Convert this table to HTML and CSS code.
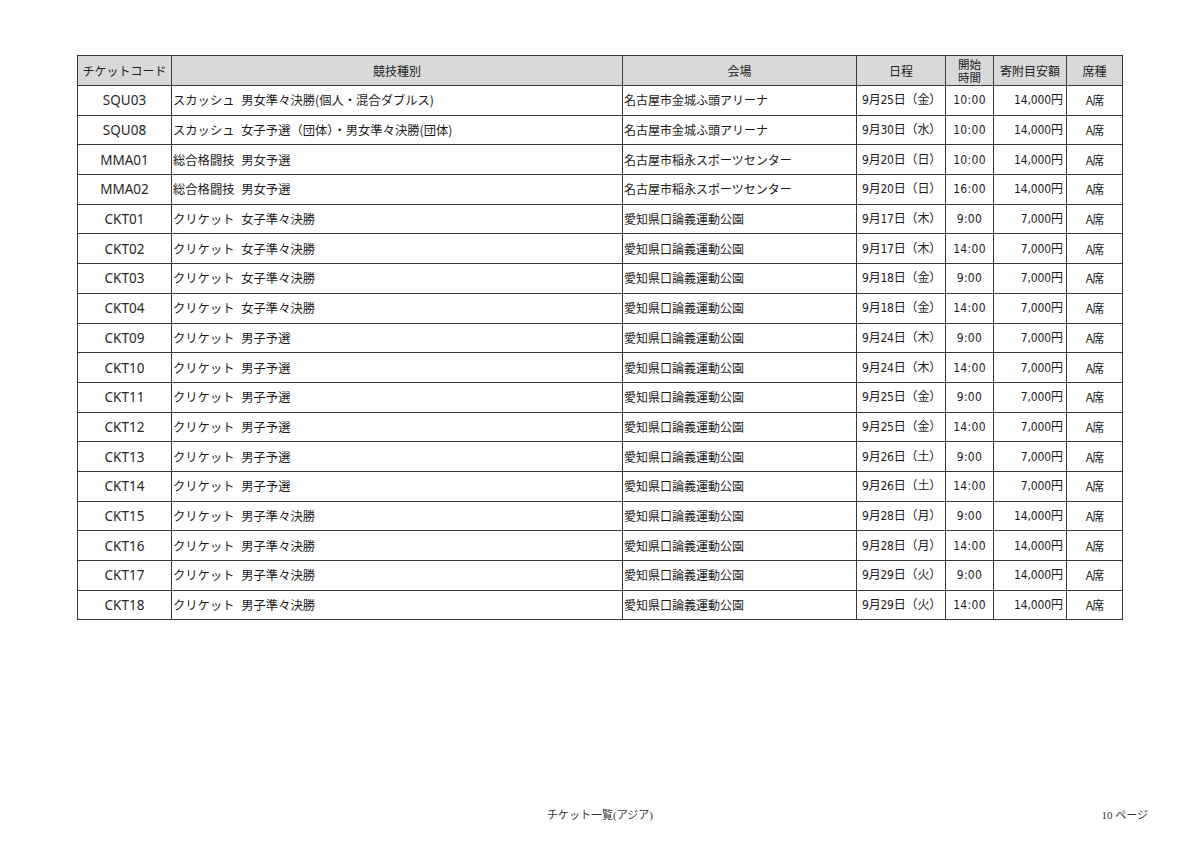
FILE: index.html
```html
<!DOCTYPE html>
<html lang="ja">
<head>
<meta charset="utf-8">
<link rel="stylesheet" href="styles.css">
</head>
<body>
<div class="page">
  <table class="tickets">
    <colgroup>
      <col class="c-code"><col class="c-event"><col class="c-venue"><col class="c-date"><col class="c-time"><col class="c-amt"><col class="c-seat">
    </colgroup>
    <thead>
      <tr>
        <th class="jp">チケットコード</th>
        <th>競技種別</th>
        <th>会場</th>
        <th>日程</th>
        <th class="two"><span class="ln">開始</span><span class="ln">時間</span></th>
        <th>寄附目安額</th>
        <th>席種</th>
      </tr>
    </thead>
    <tbody>
      <tr><td class="code">SQU03</td><td class="ev">スカッシュ 男女準々決勝(個人・混合ダブルス)</td><td class="ven">名古屋市金城ふ頭アリーナ</td><td class="date">9月25日（金）</td><td class="time">10:00</td><td class="amt">14,000円</td><td class="seat">A席</td></tr>
      <tr><td class="code">SQU08</td><td class="ev">スカッシュ 女子予選（団体）・男女準々決勝(団体)</td><td class="ven">名古屋市金城ふ頭アリーナ</td><td class="date">9月30日（水）</td><td class="time">10:00</td><td class="amt">14,000円</td><td class="seat">A席</td></tr>
      <tr><td class="code">MMA01</td><td class="ev">総合格闘技 男女予選</td><td class="ven">名古屋市稲永スポーツセンター</td><td class="date">9月20日（日）</td><td class="time">10:00</td><td class="amt">14,000円</td><td class="seat">A席</td></tr>
      <tr><td class="code">MMA02</td><td class="ev">総合格闘技 男女予選</td><td class="ven">名古屋市稲永スポーツセンター</td><td class="date">9月20日（日）</td><td class="time">16:00</td><td class="amt">14,000円</td><td class="seat">A席</td></tr>
      <tr><td class="code">CKT01</td><td class="ev">クリケット 女子準々決勝</td><td class="ven">愛知県口論義運動公園</td><td class="date">9月17日（木）</td><td class="time">9:00</td><td class="amt">7,000円</td><td class="seat">A席</td></tr>
      <tr><td class="code">CKT02</td><td class="ev">クリケット 女子準々決勝</td><td class="ven">愛知県口論義運動公園</td><td class="date">9月17日（木）</td><td class="time">14:00</td><td class="amt">7,000円</td><td class="seat">A席</td></tr>
      <tr><td class="code">CKT03</td><td class="ev">クリケット 女子準々決勝</td><td class="ven">愛知県口論義運動公園</td><td class="date">9月18日（金）</td><td class="time">9:00</td><td class="amt">7,000円</td><td class="seat">A席</td></tr>
      <tr><td class="code">CKT04</td><td class="ev">クリケット 女子準々決勝</td><td class="ven">愛知県口論義運動公園</td><td class="date">9月18日（金）</td><td class="time">14:00</td><td class="amt">7,000円</td><td class="seat">A席</td></tr>
      <tr><td class="code">CKT09</td><td class="ev">クリケット 男子予選</td><td class="ven">愛知県口論義運動公園</td><td class="date">9月24日（木）</td><td class="time">9:00</td><td class="amt">7,000円</td><td class="seat">A席</td></tr>
      <tr><td class="code">CKT10</td><td class="ev">クリケット 男子予選</td><td class="ven">愛知県口論義運動公園</td><td class="date">9月24日（木）</td><td class="time">14:00</td><td class="amt">7,000円</td><td class="seat">A席</td></tr>
      <tr><td class="code">CKT11</td><td class="ev">クリケット 男子予選</td><td class="ven">愛知県口論義運動公園</td><td class="date">9月25日（金）</td><td class="time">9:00</td><td class="amt">7,000円</td><td class="seat">A席</td></tr>
      <tr><td class="code">CKT12</td><td class="ev">クリケット 男子予選</td><td class="ven">愛知県口論義運動公園</td><td class="date">9月25日（金）</td><td class="time">14:00</td><td class="amt">7,000円</td><td class="seat">A席</td></tr>
      <tr><td class="code">CKT13</td><td class="ev">クリケット 男子予選</td><td class="ven">愛知県口論義運動公園</td><td class="date">9月26日（土）</td><td class="time">9:00</td><td class="amt">7,000円</td><td class="seat">A席</td></tr>
      <tr><td class="code">CKT14</td><td class="ev">クリケット 男子予選</td><td class="ven">愛知県口論義運動公園</td><td class="date">9月26日（土）</td><td class="time">14:00</td><td class="amt">7,000円</td><td class="seat">A席</td></tr>
      <tr><td class="code">CKT15</td><td class="ev">クリケット 男子準々決勝</td><td class="ven">愛知県口論義運動公園</td><td class="date">9月28日（月）</td><td class="time">9:00</td><td class="amt">14,000円</td><td class="seat">A席</td></tr>
      <tr><td class="code">CKT16</td><td class="ev">クリケット 男子準々決勝</td><td class="ven">愛知県口論義運動公園</td><td class="date">9月28日（月）</td><td class="time">14:00</td><td class="amt">14,000円</td><td class="seat">A席</td></tr>
      <tr><td class="code">CKT17</td><td class="ev">クリケット 男子準々決勝</td><td class="ven">愛知県口論義運動公園</td><td class="date">9月29日（火）</td><td class="time">9:00</td><td class="amt">14,000円</td><td class="seat">A席</td></tr>
      <tr><td class="code">CKT18</td><td class="ev">クリケット 男子準々決勝</td><td class="ven">愛知県口論義運動公園</td><td class="date">9月29日（火）</td><td class="time">14:00</td><td class="amt">14,000円</td><td class="seat">A席</td></tr>
    </tbody>
  </table>
  <footer class="foot">
    <span></span>
    <span class="foot-title">チケット一覧(アジア)</span>
    <span class="foot-page">10 ページ</span>
  </footer>
</div>
</body>
</html>
```

FILE: styles.css
```css
html, body {
  margin: 0;
  padding: 0;
  background: #ffffff;
}

.page {
  box-sizing: border-box;
  width: 1200px;
  height: 849px;
  padding: 55px 0 27px 77px;
  display: flex;
  flex-direction: column;
  font-family: "Noto Sans CJK JP", "Noto Sans", sans-serif;
  color: #1a1a1a;
}

.tickets {
  border-collapse: collapse;
  table-layout: fixed;
  width: 1045px;
}

.c-code { width: 94px; }
.c-event { width: 451px; }
.c-venue { width: 234px; }
.c-date { width: 89px; }
.c-time { width: 48px; }
.c-amt { width: 73px; }
.c-seat { width: 56px; }

.tickets th,
.tickets td {
  border: 1px solid #3a3a3a;
  padding: 0 2px;
  white-space: nowrap;
  overflow: hidden;
  font-size: 12px;
  line-height: 14px;
}

.tickets th {
  background: #d9d9d9;
  font-weight: normal;
  text-align: center;
  height: 29px;
  color: #222;
}

.tickets th.two {
  padding: 0;
}

.tickets th.two .ln {
  display: block;
  font-size: 11.5px;
  line-height: 13px;
}

.tickets tbody tr {
  height: 29.7px;
}

.tickets td.code {
  text-align: center;
  font-family: "Noto Sans", "Noto Sans CJK JP", sans-serif;
  font-size: 13.5px;
  color: #262626;
}

.tickets td.ev,
.tickets td.ven {
  text-align: left;
  padding-left: 1px;
}

.tickets td.ev {
  font-size: 12.3px;
  word-spacing: 4px;
}

.tickets td.date {
  text-align: right;
  padding-right: 4px;
  font-family: "DejaVu Sans Condensed", "Noto Sans CJK JP", sans-serif;
  font-stretch: condensed;
  letter-spacing: -0.2px;
}

.tickets td.time {
  text-align: center;
  font-family: "DejaVu Sans Condensed", "Noto Sans CJK JP", sans-serif;
  font-stretch: condensed;
  letter-spacing: 0.3px;
}

.tickets td.amt {
  text-align: right;
  padding-right: 3px;
  font-family: "DejaVu Sans Condensed", "Noto Sans CJK JP", sans-serif;
  font-stretch: condensed;
  letter-spacing: -0.1px;
}

.tickets td.seat {
  text-align: center;
  letter-spacing: -1px;
}

.foot {
  margin-top: auto;
  margin-left: -77px;
  width: 1200px;
  display: grid;
  grid-template-columns: 1fr auto 1fr;
  align-items: center;
  font-family: "Liberation Serif", "Noto Sans CJK JP", serif;
  font-size: 11px;
  color: #333;
}

.foot-title {
  text-align: center;
}

.foot-page {
  text-align: right;
  padding-right: 52px;
}
```
